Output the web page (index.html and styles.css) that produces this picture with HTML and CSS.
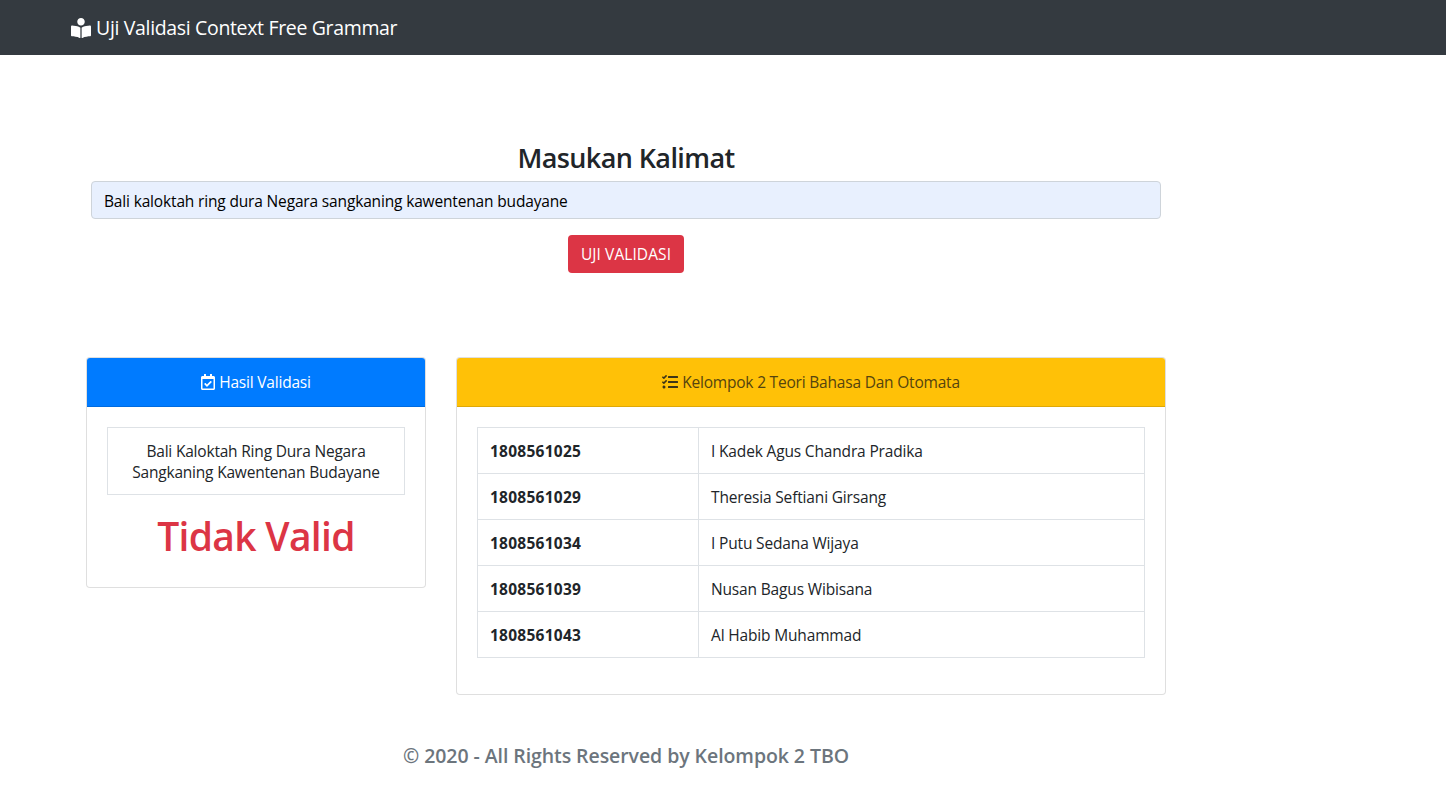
FILE: index.html
```html
<!DOCTYPE html>
<html lang="id">
<head>
<meta charset="utf-8">
<title>Uji Validasi Context Free Grammar</title>
<link rel="stylesheet" href="styles.css">
</head>
<body>
<nav class="navbar">
  <a class="brand"><svg class="icon icon-brand" viewBox="0 0 512 512"><path d="M352 96c0-53.02-42.98-96-96-96s-96 42.98-96 96 42.98 96 96 96 96-42.98 96-96zM233.59 241.09c-59.33-36.32-155.43-46.3-203.79-49.05C13.55 191.13 0 203.51 0 219.14v222.8c0 14.33 11.59 26.28 26.49 27.05 43.66 2.29 131.99 10.68 193.04 41.43 9.37 4.72 20.48-1.71 20.48-11.87V252.56c-.01-4.67-2.32-8.95-6.42-11.47zm248.61-49.05c-48.35 2.74-144.46 12.73-203.78 49.05-4.1 2.51-6.41 6.96-6.41 11.63v245.79c0 10.19 11.14 16.63 20.54 11.9 61.04-30.72 149.32-39.11 192.97-41.4 14.9-.78 26.49-12.73 26.49-27.06V219.14c-.01-15.63-13.56-28.01-29.81-27.1z"/></svg><span class="brand-text">Uji Validasi Context Free Grammar</span></a>
</nav>
<main class="container">
  <form class="form">
    <h3 class="form-title">Masukan Kalimat</h3>
    <div class="input">Bali kaloktah ring dura Negara sangkaning kawentenan budayane</div>
    <button class="btn" type="button">UJI VALIDASI</button>
  </form>
  <div class="row">
    <section class="card card-result">
      <div class="card-header header-blue"><svg class="icon icon-calendar" viewBox="0 0 448 512"><path d="M400 64h-48V12c0-6.627-5.373-12-12-12h-40c-6.627 0-12 5.373-12 12v52H160V12c0-6.627-5.373-12-12-12h-40c-6.627 0-12 5.373-12 12v52H48C21.49 64 0 85.49 0 112v352c0 26.51 21.49 48 48 48h352c26.51 0 48-21.49 48-48V112c0-26.51-21.49-48-48-48zm-6 400H54a6 6 0 0 1-6-6V160h352v298a6 6 0 0 1-6 6zm-52.849-200.65L198.842 404.519c-4.705 4.667-12.303 4.637-16.971-.068l-75.091-75.699c-4.667-4.705-4.637-12.303.068-16.971l22.719-22.536c4.705-4.667 12.303-4.637 16.97.069l44.104 44.461 111.072-110.181c4.705-4.667 12.303-4.637 16.971.068l22.536 22.718c4.667 4.705 4.636 12.303-.069 16.97z"/></svg><span class="result-title">Hasil Validasi</span></div>
      <div class="card-body">
        <div class="sentence">Bali Kaloktah Ring Dura Negara<br>Sangkaning Kawentenan Budayane</div>
        <h1 class="verdict">Tidak Valid</h1>
      </div>
    </section>
    <section class="card card-group">
      <div class="card-header header-yellow"><svg class="icon icon-tasks" viewBox="0 0 512 512"><path d="M139.61 35.5a12 12 0 0 0-17 0L58.93 98.81l-22.7-22.12a12 12 0 0 0-17 0L3.53 92.41a12 12 0 0 0 0 17l47.59 47.4a12.78 12.78 0 0 0 17.61 0l15.59-15.62L156.52 69a12.09 12.09 0 0 0 .09-17zm0 159.19a12 12 0 0 0-17 0l-63.68 63.72-22.7-22.1a12 12 0 0 0-17 0L3.53 252a12 12 0 0 0 0 17L51 316.5a12.77 12.77 0 0 0 17.6 0l15.7-15.69 72.2-72.22a12 12 0 0 0 .09-16.9zM64 368c-26.49 0-48.59 21.5-48.59 48S37.53 464 64 464a48 48 0 0 0 0-96zm432 16H208a16 16 0 0 0-16 16v32a16 16 0 0 0 16 16h288a16 16 0 0 0 16-16v-32a16 16 0 0 0-16-16zm0-320H208a16 16 0 0 0-16 16v32a16 16 0 0 0 16 16h288a16 16 0 0 0 16-16V80a16 16 0 0 0-16-16zm0 160H208a16 16 0 0 0-16 16v32a16 16 0 0 0 16 16h288a16 16 0 0 0 16-16v-32a16 16 0 0 0-16-16z"/></svg><span class="group-title">Kelompok 2 Teori Bahasa Dan Otomata</span></div>
      <div class="card-body">
        <table class="table">
          <tr><th>1808561025</th><td>I Kadek Agus Chandra Pradika</td></tr>
          <tr><th>1808561029</th><td>Theresia Seftiani Girsang</td></tr>
          <tr><th>1808561034</th><td>I Putu Sedana Wijaya</td></tr>
          <tr><th>1808561039</th><td>Nusan Bagus Wibisana</td></tr>
          <tr><th>1808561043</th><td>Al Habib Muhammad</td></tr>
        </table>
      </div>
    </section>
  </div>
  <footer class="footer"><h5 class="footer-text">© 2020 - All Rights Reserved by Kelompok 2 TBO</h5></footer>
</main>
</body>
</html>
```
FILE: styles.css
```css
*, *::before, *::after { box-sizing: border-box; }
body { margin: 0; background: #fff; color: #212529; font-family: "Open Sans", "Noto Sans", sans-serif; font-size: 15.5px; line-height: 24px; letter-spacing: -0.16px; overflow: hidden; }
h1, h3, h5 { margin: 0; }
.icon { fill: currentColor; flex: none; }

.navbar { height: 55px; padding-left: 71px; background: #343a40; display: flex; align-items: center; }
.brand { display: flex; align-items: center; gap: 5px; color: #fff; font-size: 19.5px; line-height: 30px; }
.icon-brand { width: 20px; height: 20px; }
.brand-text { letter-spacing: -0.34px; white-space: nowrap; }

.container { width: 1080px; margin-left: 86px; padding-top: 86px; }
.form { display: flex; flex-direction: column; align-items: center; padding: 0 5px; }
.form-title { font-size: 27px; font-weight: 600; line-height: 34px; letter-spacing: -0.6px; margin-bottom: 6px; }
.input { width: 100%; height: 38px; padding: 7px 12px; border: 1px solid #ced4da; border-radius: 4px; background: #e8f0fe; color: #000; white-space: nowrap; }
.btn { width: 116px; height: 38px; margin-top: 16px; padding: 0; border: 0; border-radius: 4px; background: #dc3545; color: #fff; font: inherit; letter-spacing: 0.08px; white-space: nowrap; }

.row { display: grid; grid-template-columns: 340px 710px; gap: 30px; align-items: start; margin-top: 84px; }
.card { border: 1px solid rgba(0, 0, 0, .125); border-radius: 4px; background: #fff; }
.card-header { height: 49px; border-bottom: 1px solid rgba(0, 0, 0, .125); border-radius: 3px 3px 0 0; display: flex; align-items: center; justify-content: center; gap: 4px; white-space: nowrap; }
.header-blue { background: #007bff; color: #fff; letter-spacing: -0.2px; }
.header-yellow { background: #ffc107; color: #54440f; letter-spacing: -0.2px; }
.icon-calendar { width: 14px; height: 16px; }
.icon-tasks { width: 16px; height: 16px; color: #3d3518; }
.card-body { padding: 20px; }
.card-result { height: 231px; }
.sentence { height: 68px; padding-top: 13px; border: 1px solid #dee2e6; text-align: center; line-height: 21px; letter-spacing: -0.2px; white-space: nowrap; }
.verdict { margin-top: 17px; color: #dc3545; font-size: 39px; font-weight: 600; line-height: 48px; letter-spacing: -0.7px; text-align: center; white-space: nowrap; }
.table { width: 668px; margin-bottom: 16px; border-collapse: collapse; table-layout: fixed; }
.table th, .table td { height: 46px; padding: 0 12px; border: 1px solid #dee2e6; text-align: left; white-space: nowrap; }
.table th { width: 221px; font-weight: 700; letter-spacing: 0.25px; }

.footer { margin-top: 46px; text-align: center; }
.footer-text { color: #6c757d; font-size: 19.5px; font-weight: 600; line-height: 30px; letter-spacing: -0.07px; white-space: nowrap; }
```
